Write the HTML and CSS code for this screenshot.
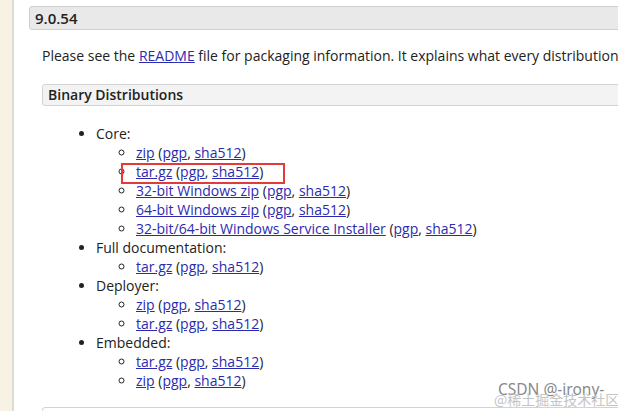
FILE: index.html
```html
<!DOCTYPE html>
<html>
<head>
<meta charset="utf-8">
<link rel="stylesheet" href="styles.css">
</head>
<body>
<div class="page">
  <div class="side"></div>
  <div class="main">
    <h3 class="ver">9.0.54</h3>
    <div class="sec">
      <p class="intro">Please see the <a href="#">README</a> file for packaging information. It explains what every distribution</p>
      <h4 class="sub">Binary Distributions</h4>
      <ul class="dist">
        <li>Core:
          <ul>
            <li><a href="#">zip</a> (<a href="#">pgp</a>, <a href="#">sha512</a>)</li>
            <li><a href="#">tar.gz</a> (<a href="#">pgp</a>, <a href="#">sha512</a>)</li>
            <li><a href="#">32-bit Windows zip</a> (<a href="#">pgp</a>, <a href="#">sha512</a>)</li>
            <li><a href="#">64-bit Windows zip</a> (<a href="#">pgp</a>, <a href="#">sha512</a>)</li>
            <li><a href="#">32-bit/64-bit Windows Service Installer</a> (<a href="#">pgp</a>, <a href="#">sha512</a>)</li>
          </ul>
        </li>
        <li>Full documentation:
          <ul>
            <li><a href="#">tar.gz</a> (<a href="#">pgp</a>, <a href="#">sha512</a>)</li>
          </ul>
        </li>
        <li>Deployer:
          <ul>
            <li><a href="#">zip</a> (<a href="#">pgp</a>, <a href="#">sha512</a>)</li>
            <li><a href="#">tar.gz</a> (<a href="#">pgp</a>, <a href="#">sha512</a>)</li>
          </ul>
        </li>
        <li>Embedded:
          <ul>
            <li><a href="#">tar.gz</a> (<a href="#">pgp</a>, <a href="#">sha512</a>)</li>
            <li><a href="#">zip</a> (<a href="#">pgp</a>, <a href="#">sha512</a>)</li>
          </ul>
        </li>
      </ul>
      <div class="sub next"></div>
    </div>
  </div>
</div>
<div class="mark"></div>
<div class="wm">
  <span class="wm1">CSDN @-irony-</span>
  <span class="wm2">@稀土掘金技术社区</span>
</div>
</body>
</html>
```

FILE: styles.css
```css
html, body {
  margin: 0;
  padding: 0;
  background: #fff;
  overflow: hidden;
}
body {
  font-family: "Open Sans", "Noto Sans", sans-serif;
  color: #222;
  font-size: 14px;
  width: 618px;
  height: 411px;
  position: relative;
}
.page {
  display: flex;
  height: 411px;
}
.side {
  width: 12px;
  flex: none;
  background: #f7f2e4;
  border-right: 2px solid #dedbd3;
}
.main {
  flex: 1;
  padding-left: 15px;
  overflow: hidden;
}
.ver {
  margin: 6px -20px 0 0;
  height: 22px;
  line-height: 22px;
  padding: 0 5px;
  font-size: 15px;
  font-weight: 600;
  color: #222;
  background: #e9e9e9;
  border: 1px solid #cfcfcf;
  border-radius: 3px;
}
.sec {
  padding-left: 13px;
}
.intro {
  margin: 16px 0 0 0;
  line-height: 19px;
  white-space: nowrap;
}
a {
  color: #2b2bb0;
  text-decoration: underline;
}
.sub {
  margin: 19px -20px 0 0;
  height: 20px;
  line-height: 20px;
  padding: 0 5px;
  font-size: 14px;
  font-weight: 600;
  color: #222;
  background: #f3f3f3;
  border: 1px solid #d3d3d3;
  border-radius: 3px;
}
.sub.next {
  margin-top: 17px;
  background: #fff;
}
.dist {
  margin: 18px 0 0 0;
  padding-left: 54px;
  line-height: 19px;
}
.dist ul {
  margin: 0;
  padding-left: 40px;
  list-style-type: circle;
}
.mark {
  position: absolute;
  left: 121px;
  top: 163px;
  width: 160px;
  height: 17px;
  border: 2px solid #e53a3a;
}
.wm {
  position: absolute;
  left: 494px;
  top: 378px;
  width: 124px;
  height: 30px;
}
.wm1 {
  position: absolute;
  left: 4px;
  top: 0;
  font-family: "Noto Sans", "Open Sans", sans-serif;
  font-size: 15.5px;
  color: #8a8a8a;
  white-space: nowrap;
}
.wm2 {
  position: absolute;
  left: 0;
  top: 11px;
  font-family: "Noto Sans CJK SC", sans-serif;
  font-size: 14px;
  color: #c4c4c4;
  white-space: nowrap;
}
```
